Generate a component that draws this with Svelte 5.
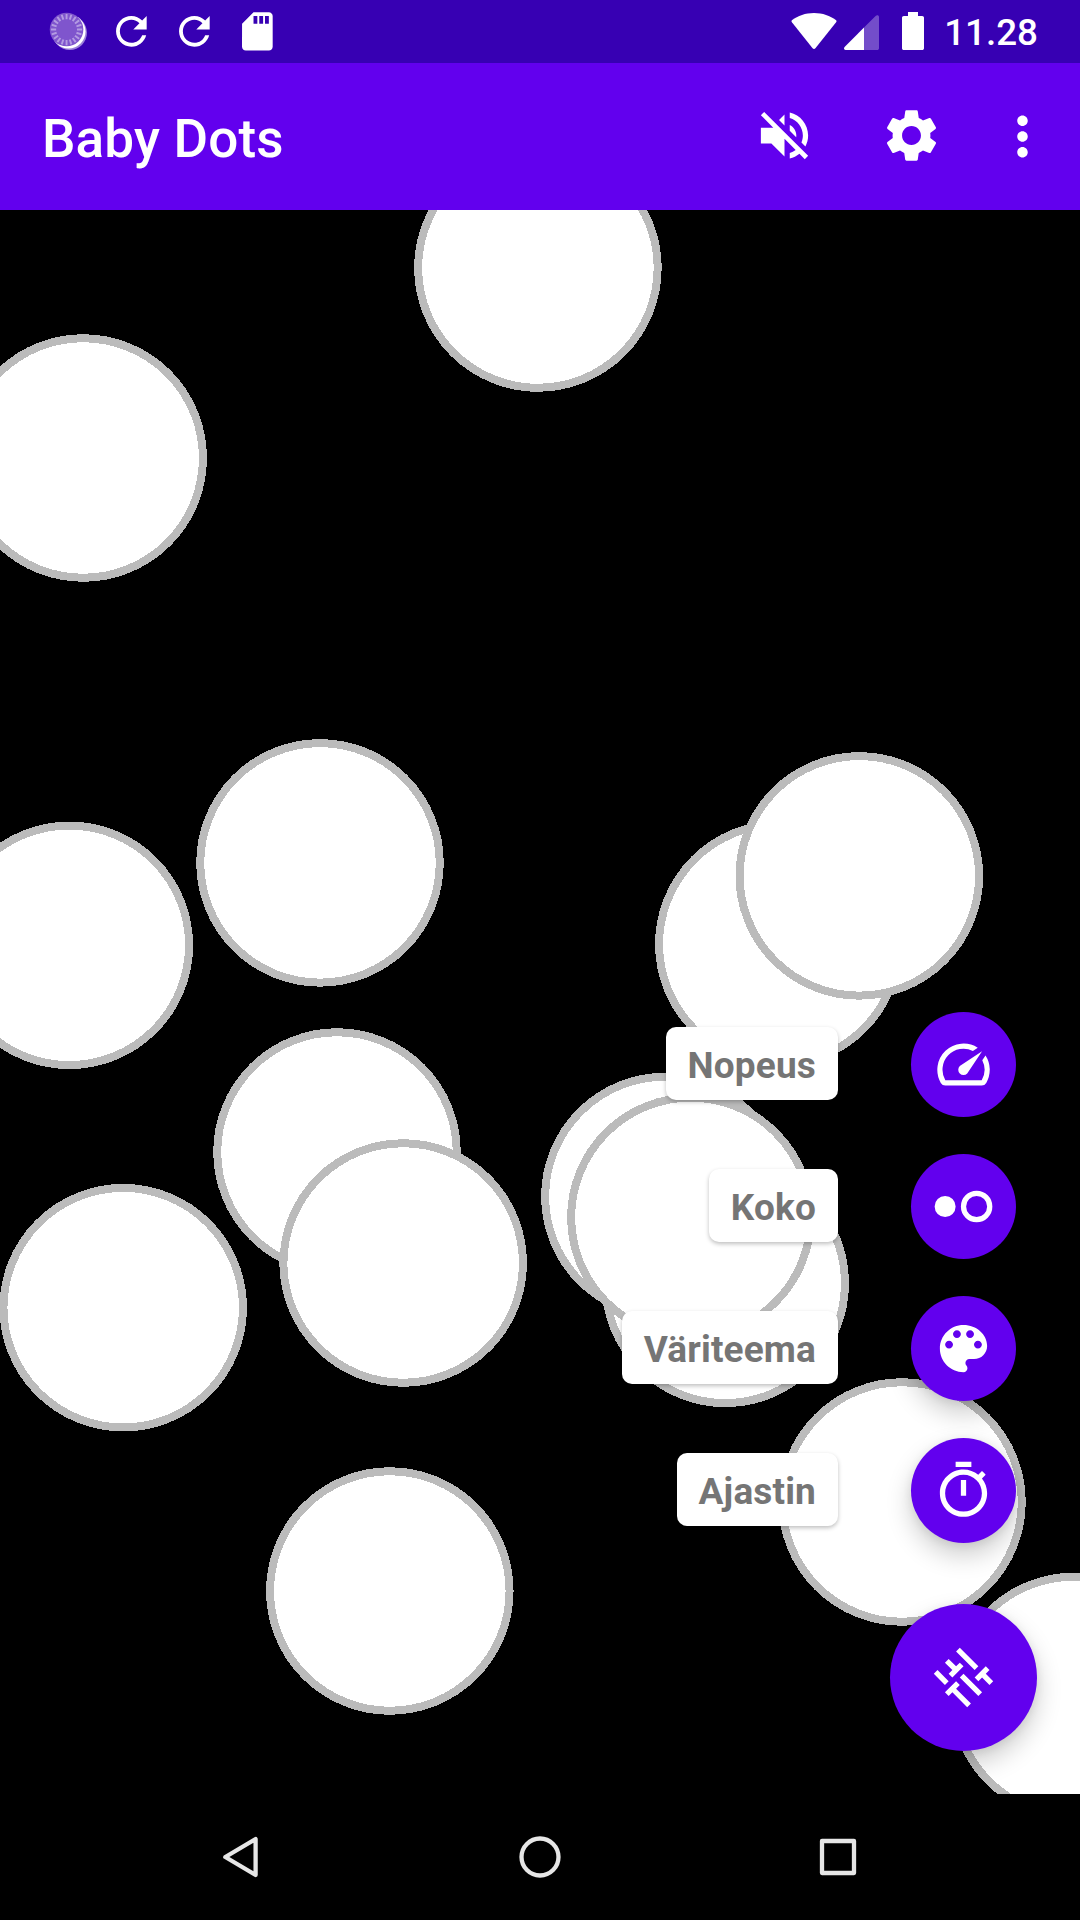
<script>
  const radius = 119.75;

  // Centre points of the dots, back to front, relative to the stage
  const dots = [
    [537.9, 58],
    [83.2, 248],
    [320, 652.9],
    [69.3, 735.3],
    [778.8, 734.2],
    [859.3, 665.9],
    [337, 942],
    [403.2, 1053],
    [123.2, 1097.7],
    [725.2, 1073.3],
    [664.9, 986.5],
    [690.9, 1007.4],
    [902, 1292],
    [389.8, 1381],
    [1073.6, 1486.5]
  ];

  const icons = {
    refresh:
      'M17.65 6.35C16.2 4.9 14.21 4 12 4c-4.42 0-7.99 3.58-7.99 8s3.57 8 7.99 8c3.73 0 6.84-2.55 7.73-6h-2.08c-.82 2.33-3.04 4-5.65 4-3.31 0-6-2.69-6-6s2.69-6 6-6c1.66 0 3.14.69 4.22 1.78L13 11h7V4l-2.35 2.35z',
    card: 'M18 2h-8L4.02 8 4 20c0 1.1.9 2 2 2h12c1.1 0 2-.9 2-2V4c0-1.1-.9-2-2-2zm-6 6h-2V4h2v4zm3 0h-2V4h2v4zm3 0h-2V4h2v4z',
    muted:
      'M16.5 12c0-1.77-1.02-3.29-2.5-4.03v2.21l2.45 2.45c.03-.2.05-.41.05-.63zm2.5 0c0 .94-.2 1.82-.54 2.64l1.51 1.51C20.63 14.91 21 13.5 21 12c0-4.28-2.99-7.86-7-8.77v2.06c2.89.86 5 3.54 5 6.71zM4.27 3L3 4.27 7.73 9H3v6h4l5 5v-6.73l4.25 4.25c-.67.52-1.42.93-2.25 1.18v2.06c1.38-.31 2.63-.95 3.69-1.81L19.73 21 21 19.73l-9-9L4.27 3zM12 4L9.91 6.09 12 8.18V4z',
    settings:
      'M19.14 12.94c.04-.3.06-.61.06-.94 0-.32-.02-.64-.07-.94l2.03-1.58c.18-.14.23-.41.12-.61l-1.92-3.32c-.12-.22-.37-.29-.59-.22l-2.39.96c-.5-.38-1.03-.7-1.62-.94l-.36-2.54c-.04-.24-.24-.41-.48-.41h-3.84c-.24 0-.43.17-.47.41l-.36 2.54c-.59.24-1.13.57-1.62.94l-2.39-.96c-.22-.08-.47 0-.59.22L2.74 8.87c-.12.21-.08.47.12.61l2.03 1.58c-.05.3-.09.63-.09.94s.02.64.07.94l-2.03 1.58c-.18.14-.23.41-.12.61l1.92 3.32c.12.22.37.29.59.22l2.39-.96c.5.38 1.03.7 1.62.94l.36 2.54c.05.24.24.41.48.41h3.84c.24 0 .44-.17.47-.41l.36-2.54c.59-.24 1.13-.56 1.62-.94l2.39.96c.22.08.47 0 .59-.22l1.92-3.32c.12-.22.07-.47-.12-.61l-2.01-1.58zM12 15.6c-1.98 0-3.6-1.62-3.6-3.6s1.62-3.6 3.6-3.6 3.6 1.62 3.6 3.6-1.62 3.6-3.6 3.6z',
    more: 'M12 8c1.1 0 2-.9 2-2s-.9-2-2-2-2 .9-2 2 .9 2 2 2zm0 2c-1.1 0-2 .9-2 2s.9 2 2 2 2-.9 2-2-.9-2-2-2zm0 6c-1.1 0-2 .9-2 2s.9 2 2 2 2-.9 2-2-.9-2-2-2z',
    tune: 'M3 17v2h6v-2H3zM3 5v2h10V5H3zm10 16v-2h8v-2h-8v-2h-2v6h2zM7 9v2H3v2h4v2h2V9H7zm14 4v-2H11v2h10zm-6-4h2V7h4V5h-4V3h-2v6z'
  };

  const actions = [
    {
      label: 'Nopeus',
      icon: 'M20.38 8.57l-1.23 1.85a8 8 0 0 1-.22 7.58H5.07A8 8 0 0 1 15.58 6.85l1.85-1.23A10 10 0 0 0 3.35 19a2 2 0 0 0 1.72 1h13.85a2 2 0 0 0 1.74-1 10 10 0 0 0-.27-10.44zm-9.79 6.84a2 2 0 0 0 2.83 0l5.66-8.49-8.49 5.66a2 2 0 0 0 0 2.83z'
    },
    {
      label: 'Koko',
      icon: 'M5 8a4 4 0 1 0 0 8 4 4 0 0 0 0-8zM17 6a6 6 0 1 0 0 12 6 6 0 0 0 0-12zm0 10a4 4 0 1 1 0-8 4 4 0 0 1 0 8z'
    },
    {
      label: 'Väriteema',
      icon: 'M12 3c-4.97 0-9 4.03-9 9s4.03 9 9 9c.83 0 1.5-.67 1.5-1.5 0-.39-.15-.74-.39-1.01-.23-.26-.38-.61-.38-.99 0-.83.67-1.5 1.5-1.5H16c2.76 0 5-2.24 5-5 0-4.42-4.03-8-9-8zm-5.5 9c-.83 0-1.5-.67-1.5-1.5S5.67 9 6.5 9 8 9.67 8 10.5 7.33 12 6.5 12zm3-4C8.67 8 8 7.33 8 6.5S8.67 5 9.5 5s1.5.67 1.5 1.5S10.33 8 9.5 8zm5 0c-.83 0-1.5-.67-1.5-1.5S13.67 5 14.5 5s1.5.67 1.5 1.5S15.33 8 14.5 8zm3 4c-.83 0-1.5-.67-1.5-1.5S16.67 9 17.5 9s1.5.67 1.5 1.5-.67 1.5-1.5 1.5z'
    },
    {
      label: 'Ajastin',
      icon: 'M15 1H9v2h6V1zm-4 13h2V8h-2v6zm8.03-6.61l1.42-1.42c-.43-.51-.9-.99-1.41-1.41l-1.42 1.42C16.07 4.74 14.12 4 12 4c-4.97 0-9 4.03-9 9s4.02 9 9 9 9-4.03 9-9c0-2.12-.74-4.07-1.97-5.61zM12 20c-3.87 0-7-3.13-7-7s3.13-7 7-7 7 3.13 7 7-3.13 7-7 7z'
    }
  ];

  const ticks = Array.from({ length: 20 }, (_, i) => i * 18);
</script>

{#snippet icon(path, kind)}
  <svg class={kind} viewBox="0 0 24 24" aria-hidden="true"><path d={path} /></svg>
{/snippet}

<div class="screen">
  <header class="status">
    <div class="notices">
      <svg class="small" viewBox="0 0 46 46" aria-hidden="true">
        <circle cx="24.4" cy="24.4" r="17.2" fill-opacity=".5" />
        <circle cx="23.2" cy="23.2" r="17" />
        <circle class="disc" cx="21.2" cy="21.2" r="16.8" />
        {#each ticks as angle}
          <path class="tick" d="M21.2 5.6v5.2" transform="rotate({angle} 21.2 21.2)" />
        {/each}
      </svg>
      {@render icon(icons.refresh, 'small')}
      {@render icon(icons.refresh, 'small')}
      {@render icon(icons.card, 'small')}
    </div>
    <div class="system">
      <svg class="wifi" viewBox="0 0 46 38" aria-hidden="true">
        <path d="M23 1C14.500 1 6.700 3.800 1.200 8c-.9.700-.9 1.500-.3 2.300l20.700 25.900c.8 1 2 1 2.800 0l20.700-25.900c.6-.8.6-1.600-.3-2.300C39.300 3.800 31.500 1 23 1z" />
      </svg>
      <svg class="signal" viewBox="0 0 35 35" aria-hidden="true">
        <path fill-opacity=".3" d="M20 12.500 31.600.900C32.800-.300 35-.100 35 2v31.200c0 1-.8 1.800-1.800 1.800H20z" />
        <path d="M20 12.500V35H1.600C0 35-.500 33 .600 31.900z" />
      </svg>
      <svg class="battery" viewBox="0 0 22 38" aria-hidden="true">
        <path d="M6 0h10v4h4.200c1 0 1.800.8 1.800 1.800v30.400c0 1-.8 1.800-1.800 1.800H1.800C.8 38 0 37.200 0 36.200V5.800C0 4.800.8 4 1.800 4H6z" />
      </svg>
      <span class="clock">11.28</span>
    </div>
  </header>

  <nav class="appbar">
    <h1>Baby Dots</h1>
    <div class="tools">
      {@render icon(icons.muted, 'regular')}
      {@render icon(icons.settings, 'regular')}
      {@render icon(icons.more, 'regular more')}
    </div>
  </nav>

  <main class="stage">
    <svg class="dots" viewBox="0 0 1080 1584" aria-hidden="true">
      {#each dots as [x, y]}
        <circle cx={x} cy={y} r={radius} />
      {/each}
    </svg>
    <div class="dial">
      {#each actions as action}
        <div class="row">
          <span class="label">{action.label}</span>
          <button class="mini" aria-label={action.label}>{@render icon(action.icon, 'regular')}</button>
        </div>
      {/each}
      <button class="fab" aria-label="Valikko">{@render icon(icons.tune, 'regular turned')}</button>
    </div>
  </main>

  <footer class="keys">
    <svg viewBox="0 0 48 48" aria-hidden="true"><path d="M37.600 6v36L7.300 24z" /></svg>
    <svg viewBox="0 0 48 48" aria-hidden="true"><circle cx="24" cy="24" r="18.500" /></svg>
    <svg viewBox="0 0 48 48" aria-hidden="true"><rect x="8" y="8" width="32" height="32" /></svg>
  </footer>
</div>

<style>
  :global(body) {
    margin: 0;
    background: #000;
  }
  .screen {
    display: flex;
    flex-direction: column;
    width: 1080px;
    height: 1920px;
    overflow: hidden;
    background: #000;
    color: #fff;
    font-family: Roboto, sans-serif;
  }
  svg {
    display: block;
    flex: none;
    fill: #fff;
  }
  .status {
    display: flex;
    justify-content: space-between;
    align-items: flex-start;
    box-sizing: border-box;
    height: 63px;
    padding: 0 42px 0 45px;
    background: #3700b3;
  }
  .notices {
    display: flex;
    gap: 17px;
    padding-top: 8px;
  }
  .small {
    width: 46px;
    height: 46px;
    transform: translate(0.350px, 0.350px);
  }
  .disc {
    fill: #7f55cd;
  }
  .tick {
    stroke: #b49be2;
    stroke-width: 1.900;
  }
  .system {
    display: flex;
    align-items: flex-start;
  }
  .wifi {
    width: 46px;
    height: 38px;
    margin: 12px 7px 0 0;
  }
  .signal {
    width: 35px;
    height: 35px;
    margin: 15px 23px 0 0;
  }
  .battery {
    width: 22px;
    height: 38px;
    margin: 12px 20px 0 0;
  }
  .clock {
    font-size: 36.750px;
    font-weight: 500;
    line-height: 43px;
    margin-top: 11px;
  }
  .appbar {
    display: flex;
    justify-content: space-between;
    align-items: center;
    box-sizing: border-box;
    height: 147px;
    padding: 0 26px 0 42px;
    background: #6200ee;
  }
  h1 {
    margin: 5px 0 0;
    font-size: 53px;
    font-weight: 500;
    line-height: 62px;
    letter-spacing: 0.150px;
  }
  .tools {
    display: flex;
    gap: 63px;
    margin-bottom: 2px;
  }
  .regular {
    width: 63px;
    height: 63px;
  }
  .tools .regular:first-child {
    margin-right: 0.700px;
  }
  .more {
    margin: 1px 0 -1px -15px;
  }
  .stage {
    position: relative;
    flex: none;
    height: 1584px;
    overflow: hidden;
  }
  .dots {
    width: 1080px;
    height: 1584px;
  }
  .dots circle {
    fill: #fff;
    stroke: #bbb;
    stroke-width: 8;
    shape-rendering: crispEdges;
  }
  .dial {
    position: absolute;
    right: 43px;
    bottom: 43px;
    display: flex;
    flex-direction: column;
    align-items: flex-end;
    gap: 37px;
  }
  .row {
    display: flex;
    align-items: center;
    gap: 73px;
    margin-right: 21px;
  }
  .label {
    box-sizing: border-box;
    height: 73px;
    margin-bottom: 2px;
    padding: 0 22px;
    border-radius: 10px;
    background: #fff;
    color: #757575;
    font-size: 37px;
    font-weight: 700;
    line-height: 77px;
    letter-spacing: 0.150px;
    box-shadow: 0 2px 4px rgba(0, 0, 0, 0.25);
  }
  button {
    display: grid;
    place-items: center;
    padding: 0;
    border: 0;
    border-radius: 50%;
    background: #6200ee;
    box-shadow: 0 12px 26px rgba(0, 0, 0, 0.2), 0 2px 10px rgba(0, 0, 0, 0.08);
  }
  .mini {
    width: 105px;
    height: 105px;
  }
  .fab {
    width: 147px;
    height: 147px;
    margin-top: 24px;
  }
  .turned {
    transform: rotate(45deg);
  }
  .keys {
    display: flex;
    flex: 1;
    justify-content: center;
    align-items: center;
    gap: 250px;
  }
  .keys svg {
    width: 48px;
    height: 48px;
    fill: none;
    stroke: #e6e6e6;
    stroke-width: 4.300;
    stroke-linejoin: round;
  }
</style>
